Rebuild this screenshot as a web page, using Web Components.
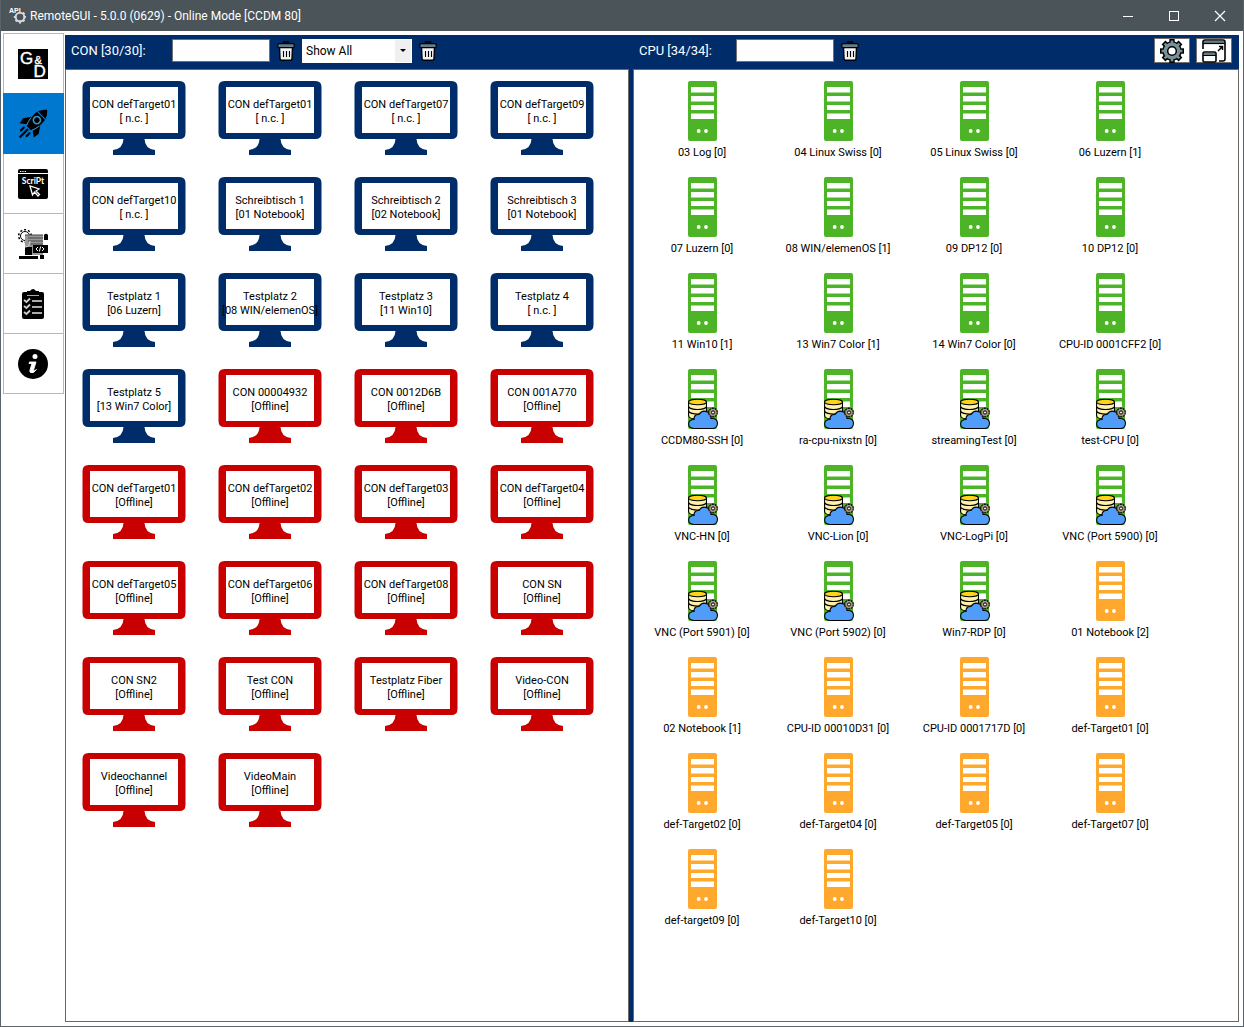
<!DOCTYPE html>
<html lang="en">
<head>
<meta charset="utf-8">
<title>RemoteGUI</title>
<style>
html, body { margin: 0; height: 100%; }
body { font-family: Roboto, "Liberation Sans", sans-serif; font-size: 11px; color: #000; background: #fff; }
</style>
</head>
<body>
<remote-app></remote-app>
<script>
function define(name, html, setup) {
  const template = document.createElement('template');
  template.innerHTML = html;
  customElements.define(name, class extends HTMLElement {
    connectedCallback() {
      if (this.shadowRoot) return;
      this.attachShadow({ mode: 'open' }).append(template.content.cloneNode(true));
      if (setup) setup(this, this.shadowRoot);
    }
  });
}

function gear(cx, cy, r, tooth, fill) {
  let spokes = '';
  for (let a = 0; a < 180; a += 45) {
    spokes += `<path d="M${cx} ${cy - r}V${cy + r}" transform="rotate(${a} ${cx} ${cy})"/>`;
  }
  return `<g stroke="#000" stroke-width="${tooth + 2.4}">${spokes}</g>
    <circle cx="${cx}" cy="${cy}" r="${r - 2.2}" fill="#000"/>
    <g stroke="${fill}" stroke-width="${tooth}" transform="translate(${cx} ${cy}) scale(.87) translate(${-cx} ${-cy})">${spokes}</g>
    <circle cx="${cx}" cy="${cy}" r="${r - 3.6}" fill="${fill}"/>`;
}

const icons = {
  api: [18, 18, `<text x="0" y="6" font-size="7" font-weight="700" fill="#fff" font-family="Liberation Sans">API</text>
    <g fill="none" stroke="#d5d8da"><circle cx="11" cy="10" r="4.3" stroke-width="2"/>
    <path d="M11 14.500V16.500M4.800 10H6.500M15.500 10H17M6.600 14.400L8 13M14 13L15.400 14.400M14 7L15.400 5.600" stroke-width="2.200"/></g>
    <circle cx="11" cy="10" r="3" fill="#4b5459"/>`],
  minimize: [12, 12, `<path d="M1 6.500H11" stroke="#fff"/>`],
  maximize: [12, 12, `<rect x="1.500" y="1.500" width="9" height="9" fill="none" stroke="#fff"/>`],
  close: [12, 12, `<path d="M1 1L11 11M11 1L1 11" stroke="#fff" stroke-width="1.200"/>`],
  logo: [30, 30, `<path d="M0 0H30V30H0z"/><text fill="#fff" stroke="#fff" stroke-width=".4" font-family="Liberation Sans" font-size="17" x="2" y="15">G<tspan x="16.500" font-size="11">&amp;</tspan><tspan x="15.500" y="28">D</tspan></text>`],
  rocket: [30, 30, `<g transform="rotate(45 15 15)"><path d="M15-5C10.500-1 9 3 9 8C9 13 10 17 12 21H18C20 17 21 13 21 8C21 3 19.500-1 15-5z"/>
    <path d="M8.700 11L4 18L5 24L10.500 20zM21.300 11L26 18L25 24L19.500 20z"/>
    <path d="M11 24V28M15 23V33M19 24V28" stroke="#000" stroke-width="2.200" stroke-linecap="round"/>
    <path d="M9.500 3H20.500" stroke="#0078d0" stroke-width="1.200"/><circle cx="15" cy="9.500" r="3.500" fill="none" stroke="#3b91bd" stroke-width="1.700"/>
    <path d="M9.200 12C9.800 16 10.500 18 11.500 20.500M20.800 12C20.200 16 19.500 18 18.500 20.500" fill="none" stroke="#3b91bd" stroke-width=".9"/></g>`],
  script: [30, 30, `<rect width="30" height="30" rx="2"/><path d="M0 4.500H30" stroke="#fff"/><path d="M2 2.500H8" stroke="#fff" stroke-width="1.200" stroke-dasharray="1.300 1"/>
    <text x="15" y="15" font-size="8.500" font-weight="700" text-anchor="middle" fill="#fff" font-family="Lato">ScriPt</text>
    <path d="M12 17L14.500 26L16.500 23L20 27L21.500 25.500L18 22L21 20z" fill="#000" stroke="#fff" stroke-width="1.300"/>`],
  code: [30, 30, `<circle cx="7" cy="7" r="4.500" fill="none" stroke="#000"/><circle cx="7" cy="7" r="6.300" fill="none" stroke="#000" stroke-width="1.500" stroke-dasharray="2 2"/>
    <path d="M7 6H25V26H7z" fill="#999"/><path d="M7 6H25M10 9H25M10 12H25M12 15H25" stroke="#444"/><path d="M7 18H14V26H7zM26 6Q28 3.500 30 6V11H26z"/>
    <path d="M7 18Q12 18 12 12" fill="none" stroke="#ddd"/>
    <rect x="15" y="16" width="15" height="8"/><path d="M20 18L18 20L20 22M24 18L26 20L24 22M22.700 17.500L21.300 22.500" fill="none" stroke="#fff"/>
    <path d="M1 27H20V30H1zM22 26H26V30H22z"/>`],
  tasks: [30, 30, `<rect x="4" y="3" width="22" height="27" rx="2"/><path d="M9 2H12Q15-2 18 2H21V6H9z"/><path d="M9 6.500H21" stroke="#aaa"/>
    <path d="M14 12H24M14 18H24M14 24H24" stroke="#aaa" stroke-width="2"/><path d="M6 11L8.500 13L12 9.500M6 17L8.500 19L12 15.500M6 23L8.500 25L12 21.500" fill="none" stroke="#ccc" stroke-width="1.900"/>`],
  info: [30, 30, `<circle cx="15" cy="15" r="15"/><circle cx="17" cy="7.500" r="2.500" fill="#fff"/><path d="M11.500 13H18L15.500 21Q15.300 23 18.500 20.500Q15.500 25 12.500 23.500Q11.500 23 12 21L14 14.500H11z" fill="#fff" stroke="#fff" stroke-width=".9"/>`],
  trash: [18, 20, `<path d="M6.500 3V1H11.500V3" fill="none" stroke="#000" stroke-width="1.500"/><path d="M2.500 6H15.500L15 17.500Q15 19.200 13.500 19.200H4.500Q3 19.200 3 17.500z" fill="#f0f2f3" stroke="#000" stroke-width="1.400"/>
    <rect x=".7" y="2.700" width="16.600" height="4" rx="1.500" fill="#607d8b" stroke="#000" stroke-width="1.200"/><path d="M6.500 10V16M9.500 10V16M12.500 10V16" stroke="#000" stroke-width="1.100"/>`],
  settings: [24, 24, gear(12, 12, 12, 3, '#78909c') + `<circle cx="12" cy="12" r="4.300" fill="#fff" stroke="#000" stroke-width="1.500"/>`],
  popout: [24, 24, `<path d="M1 10V3Q1 1 3 1H21Q23 1 23 3V20Q23 22 21 22H17" fill="#fff" stroke="#000" stroke-width="1.600"/><path d="M2 2H22V4H2z" fill="#607d8b"/><path d="M1 4.500H23" stroke="#000" stroke-width="1.200"/>
    <rect x="1" y="13" width="13" height="10" rx="1.500" fill="#fff" stroke="#000" stroke-width="1.600"/><path d="M2 14H13V16H2z" fill="#607d8b"/><path d="M1 16.500H14" stroke="#000"/><path d="M16 12L20.500 7.500M17 7.500H20.500V11" fill="none" stroke="#000" stroke-width="1.500"/>`],
  monitor: [104, 74, `<path fill="currentColor" fill-rule="evenodd" d="M6.500 0H97.500Q103.500 0 103.500 6V52Q103.500 58 97.500 58H62.500Q63 68 73 69V74H31V69Q41 68 41.500 58H6.500Q.5 58 .5 52V6Q.5 0 6.500 0zM8 6V52H96V6z"/>`],
  server: [30, 60, `<g transform="translate(1 0)"><rect width="29" height="60" rx="2" fill="currentColor"/><path d="M3 6H26V11.500H3zM3 15H26V20.500H3zM3 24H26V29H3zM3 32.500H26V38H3z" fill="#fff"/><circle cx="10.700" cy="50" r="1.900" fill="#fff"/><circle cx="18" cy="50" r="1.900" fill="#fff"/></g>`],
  cloud: [30, 60, `<g transform="translate(1 0)"><g stroke="#000" stroke-width="1.100"><path d="M.600 33V47Q1 50 9.500 50Q18 50 18.500 47V33z" fill="#fff0aa"/><path d="M.6 38Q3 40.500 9.500 40.500T18.500 38M.6 42.500Q3 45 9.500 45T18.500 42.500" fill="none"/><ellipse cx="9.500" cy="33" rx="9" ry="2.700" fill="#ffd21c"/>
    <path d="M6 59.500Q.6 59 .6 55Q.8 50.500 6 50.500Q6 45 11 45.500Q14 40.500 19.500 43Q23.500 45 23 49.500Q29.500 49 29.500 54.500Q29 59.500 24.500 59.500z" fill="#4f9df8"/></g>
    <circle cx="25" cy="43.500" r="4.200" fill="#aa9780" stroke="#111" stroke-width="1.600" stroke-dasharray="2 .6"/><circle cx="25" cy="43.500" r="3.500" fill="#aa9780"/><circle cx="25" cy="43.500" r="1.600" fill="#eee" stroke="#000"/></g>`]
};
define('app-icon', `<style>:host{display:block;flex:none}svg{display:block;overflow:visible}</style>`, (el, root) => {
  const [w, h, art] = icons[el.getAttribute('name')];
  root.innerHTML += `<svg width="${w}" height="${h}" viewBox="0 0 ${w} ${h}" aria-hidden="true">${art}</svg>`;
});

define('title-bar', `<style>
:host{display:flex;align-items:center;height:31px;box-sizing:border-box;padding-left:8px;gap:3px;background:#4b5459;color:#fff;font:12px/16px Roboto,sans-serif}
h1{flex:1;margin:0;font:inherit;white-space:nowrap}
.controls{display:flex}
button{width:46px;height:30px;border:0;padding:0;background:none;display:grid;place-items:center}
</style><app-icon name="api"></app-icon><h1><slot></slot></h1>
<div class="controls"><button aria-label="Minimize"><app-icon name="minimize"></app-icon></button><button aria-label="Maximize"><app-icon name="maximize"></app-icon></button><button aria-label="Close"><app-icon name="close"></app-icon></button></div>`);

define('nav-button', `<style>
:host{display:block;margin-top:-1px}
button{display:grid;place-items:center;width:61px;height:61px;padding:0 1px 0 0;background:#fff;border:1px solid #b8b8b8}
:host([active]) button{position:relative;background:#0078d0;border-color:#0078d0}
</style><button></button>`, (el, root) => {
  const button = root.querySelector('button');
  button.setAttribute('aria-label', el.getAttribute('label'));
  button.innerHTML = `<app-icon name="${el.getAttribute('icon')}"></app-icon>`;
});
define('side-nav', `<style>:host{display:block}nav{display:flex;flex-direction:column;padding-top:1px}</style><nav>
<nav-button icon="logo" label="Home"></nav-button><nav-button icon="rocket" label="Launch" active></nav-button><nav-button icon="script" label="Scripts"></nav-button><nav-button icon="code" label="Code"></nav-button><nav-button icon="tasks" label="Tasks"></nav-button><nav-button icon="info" label="Info"></nav-button></nav>`);

define('filter-bar', `<style>
:host{display:flex;align-items:center;height:31px;min-width:0;padding:0 7px 3px 6px;color:#fff;font-size:13px}
label{width:var(--label-width,101px);white-space:nowrap}
input{box-sizing:border-box;width:98px;height:23px;border:1px solid #707070;background:#fff;font:inherit;padding:0 4px}
button{border:0;background:none;padding:0;margin:0 7px}
::slotted(*){flex:none}
</style><label for="q"></label><input id="q" type="text"><button aria-label="Clear filter"><app-icon name="trash"></app-icon></button><slot></slot>`, (el, root) => {
  root.querySelector('label').textContent = el.getAttribute('label');
});
define('state-filter', `<style>
:host{display:flex;align-items:center}
.box{display:grid;grid-template-columns:1fr 16px;width:110px;height:24px;box-sizing:border-box;padding:1px;background:#fff}
select{grid-area:1/1/2/3;appearance:none;border:0;margin:0;padding:0 20px 0 3px;background:#fff;color:#000;font:12px/22px Roboto,sans-serif}
span{grid-area:1/2;background:#f0f0f0;display:grid;place-items:center;pointer-events:none}
span::after{content:"";border:3px solid transparent;border-top-color:#000;border-bottom:0}
button{border:0;background:none;padding:0;margin-left:7px}
</style><div class="box"><select aria-label="State"><option>Show All</option><option>Online</option><option>Offline</option></select><span></span></div><button aria-label="Reset state"><app-icon name="trash"></app-icon></button>`);
define('tool-buttons', `<style>
:host{display:flex;gap:6px;margin-left:auto}
button{display:grid;place-items:center;box-sizing:border-box;width:36px;height:25px;padding:0;border:1px solid #707070;background:#fff}
</style><button aria-label="Settings"><app-icon name="settings"></app-icon></button><button aria-label="Open in window"><app-icon name="popout"></app-icon></button>`);

define('con-tile', `<style>
:host{display:grid;justify-items:center;align-content:start;height:96px;box-sizing:border-box;padding-top:11px;color:#002d6a}
:host([offline]){color:#c80000}
app-icon,p{grid-area:1/1}
p{z-index:1;margin:17px 0 0;color:#000;text-align:center;white-space:nowrap;line-height:14px;height:28px}
</style><app-icon name="monitor"></app-icon><p><slot></slot><br><slot name="source"></slot></p>`);
define('cpu-tile', `<style>
:host{display:grid;justify-items:center;align-content:start;height:96px;box-sizing:border-box;padding-top:11px;color:#4eb427}
:host([busy]){color:#ffa82e}
app-icon{grid-area:1/1}
.virtual{display:none}:host([virtual]) .virtual{display:block}
p{grid-area:2/1;margin:5px 0 0;color:#000;white-space:nowrap;line-height:14px}
</style><app-icon name="server"></app-icon><app-icon class="virtual" name="cloud"></app-icon><p><slot></slot></p>`);
define('tile-pane', `<style>:host{display:grid;grid-template-columns:repeat(auto-fill,136px);align-content:start;box-sizing:border-box;min-width:0;border:1px solid #696969;background:#fff}</style><slot></slot>`);

define('remote-app', `<style>
:host{display:flex;flex-direction:column;box-sizing:border-box;min-height:100vh;border:1px solid #5b646a;border-top:0;background:#fff}
.body{flex:1;display:flex;padding:2px 4px 4px 2px;gap:1px}
main{flex:1;min-width:0;display:flex;flex-direction:column;margin-top:2px;background:#002d6a}
header,.panes{display:grid;grid-template-columns:564fr 606fr;gap:4px}
header{height:34px;align-items:center}
.panes{flex:1}
.cpu{--label-width:97px}
</style><title-bar>RemoteGUI - 5.0.0 (0629) - Online Mode [CCDM 80]</title-bar>
<div class="body"><side-nav></side-nav><main>
<header><filter-bar label="CON [30/30]:"><state-filter></state-filter></filter-bar><filter-bar class="cpu" label="CPU [34/34]:"><tool-buttons></tool-buttons></filter-bar></header>
<div class="panes"><tile-pane id="cons"></tile-pane><tile-pane id="cpus"></tile-pane></div></main></div>`, (el, root) => {
  const online = [['CON defTarget01', 'n.c.'], ['CON defTarget01', 'n.c.'], ['CON defTarget07', 'n.c.'], ['CON defTarget09', 'n.c.'],
    ['CON defTarget10', 'n.c.'], ['Schreibtisch 1', '01 Notebook'], ['Schreibtisch 2', '02 Notebook'], ['Schreibtisch 3', '01 Notebook'],
    ['Testplatz 1', '06 Luzern'], ['Testplatz 2', '08 WIN/elemenOS'], ['Testplatz 3', '11 Win10'], ['Testplatz 4', 'n.c.'], ['Testplatz 5', '13 Win7 Color']];
  const offline = ['CON 00004932', 'CON 0012D6B', 'CON 001A770', 'CON defTarget01', 'CON defTarget02', 'CON defTarget03', 'CON defTarget04',
    'CON defTarget05', 'CON defTarget06', 'CON defTarget08', 'CON SN', 'CON SN2', 'Test CON', 'Testplatz Fiber', 'Video-CON', 'Videochannel', 'VideoMain'];
  root.getElementById('cons').innerHTML =
    online.map(([n, s]) => `<con-tile>${n}<span slot="source">${s === 'n.c.' ? '[ n.c. ]' : `[${s}]`}</span></con-tile>`).join('') +
    offline.map(n => `<con-tile offline>${n}<span slot="source">[Offline]</span></con-tile>`).join('');
  const cpus = {
    '': ['03 Log [0]', '04 Linux Swiss [0]', '05 Linux Swiss [0]', '06 Luzern [1]', '07 Luzern [0]', '08 WIN/elemenOS [1]', '09 DP12 [0]', '10 DP12 [0]', '11 Win10 [1]', '13 Win7 Color [1]', '14 Win7 Color [0]', 'CPU-ID 0001CFF2 [0]'],
    virtual: ['CCDM80-SSH [0]', 'ra-cpu-nixstn [0]', 'streamingTest [0]', 'test-CPU [0]', 'VNC-HN [0]', 'VNC-Lion [0]', 'VNC-LogPi [0]', 'VNC (Port 5900) [0]', 'VNC (Port 5901) [0]', 'VNC (Port 5902) [0]', 'Win7-RDP [0]'],
    busy: ['01 Notebook [2]', '02 Notebook [1]', 'CPU-ID 00010D31 [0]', 'CPU-ID 0001717D [0]', 'def-Target01 [0]', 'def-Target02 [0]', 'def-Target04 [0]', 'def-Target05 [0]', 'def-Target07 [0]', 'def-target09 [0]', 'def-Target10 [0]']
  };
  root.getElementById('cpus').innerHTML = Object.entries(cpus).map(([kind, names]) => names.map(n => `<cpu-tile ${kind}>${n}</cpu-tile>`).join('')).join('');
});
</script>
</body>
</html>
